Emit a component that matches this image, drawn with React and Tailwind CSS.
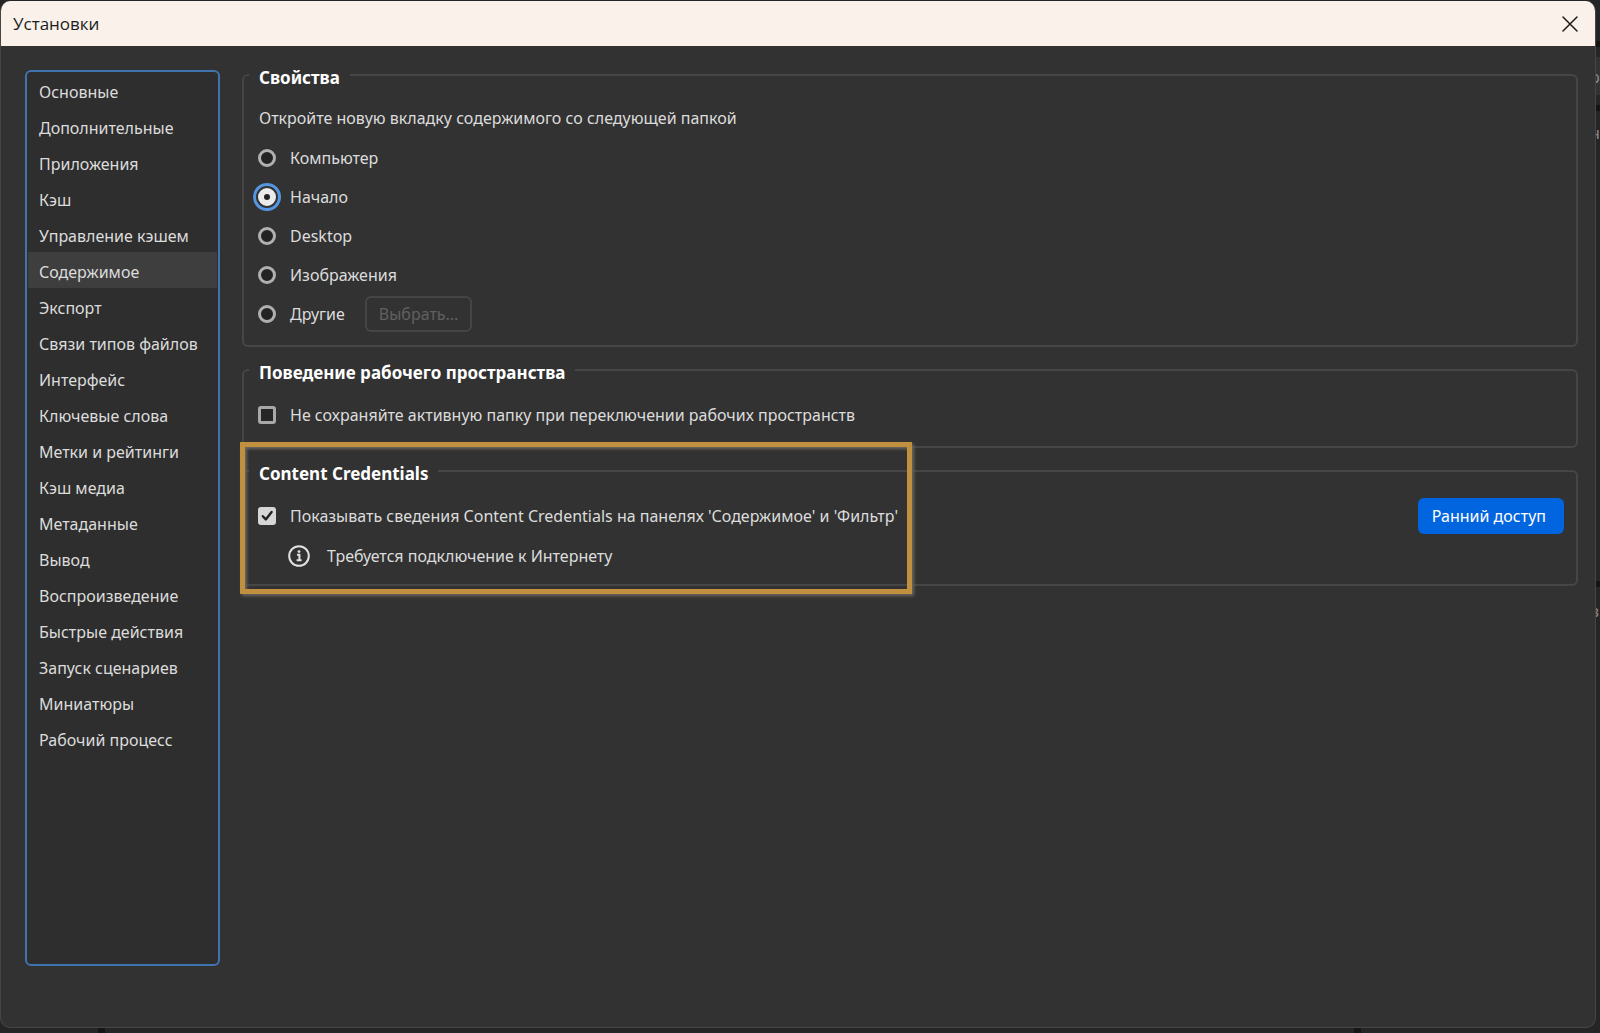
import React from "react";

const categories = [
  "Основные", "Дополнительные", "Приложения", "Кэш", "Управление кэшем", "Содержимое", "Экспорт",
  "Связи типов файлов", "Интерфейс", "Ключевые слова", "Метки и рейтинги", "Кэш медиа", "Метаданные",
  "Вывод", "Воспроизведение", "Быстрые действия", "Запуск сценариев", "Миниатюры", "Рабочий процесс",
];

const folders = ["Компьютер", "Начало", "Desktop", "Изображения", "Другие"];

function Group({ title, className, children }) {
  return (
    <fieldset className={"relative min-w-0 rounded-md border-2 border-[#464646] pl-[15px] pr-3 " + className}>
      <legend className="-ml-2.5 pl-2.5 pr-2.5 pt-1.5 text-[17px] leading-6 font-bold text-white">{title}</legend>
      {children}
    </fieldset>
  );
}

function Radio({ label, checked }) {
  return (
    <label className="flex items-center gap-3.5">
      <input
        type="radio"
        name="folder"
        defaultChecked={checked}
        className="-ml-px size-[18px] shrink-0 appearance-none rounded-full border-3 border-[#b0b0b0] bg-[#232323] checked:border-6 checked:border-[#ebebeb] checked:bg-[#222] checked:outline-3 checked:outline-offset-2 checked:outline-[#5596e3]"
      />
      {label}
    </label>
  );
}

function Check({ label, checked }) {
  return (
    <label className="flex items-center gap-3.5">
      <span className="relative -ml-px flex size-[18px] shrink-0">
        <input
          type="checkbox"
          defaultChecked={checked}
          className="peer size-[18px] appearance-none rounded-[3px] border-3 border-[#a8a8a8] bg-[#262626] checked:border-[#d6d6d6] checked:bg-[#d6d6d6]"
        />
        <svg viewBox="0 0 18 18" className="pointer-events-none absolute inset-0 hidden size-[18px] peer-checked:block" fill="none" stroke="#222" strokeWidth="2.4" strokeLinecap="round" strokeLinejoin="round">
          <path d="M4.8 9.2 7.8 12.4 13.6 5" />
        </svg>
      </span>
      {label}
    </label>
  );
}

export default function App() {
  return (
    <div className="flex min-h-screen bg-[#262526] pt-px font-['Noto_Sans',sans-serif] text-[16px] leading-6 text-[#dcdcdc]">
      <div className="flex min-w-0 grow flex-col">
        <div className="flex grow flex-col overflow-hidden rounded-[10px] border border-t-0 border-[#454545] bg-[#323232]">
          <header className="flex h-[45px] items-center justify-between bg-[#f9f1ea] pr-[15px] pl-3 text-[#1c1c1c]">
            <h1 className="font-['Open_Sans',sans-serif] text-[17px]">Установки</h1>
            <button type="button" aria-label="Закрыть" className="flex size-5 items-center justify-center">
              <svg viewBox="0 0 16 16" className="size-4" fill="none" stroke="#1c1c1c" strokeWidth="1.5" strokeLinecap="round">
                <path d="M1 1 15 15M15 1 1 15" />
              </svg>
            </button>
          </header>
          <div className="flex grow gap-[22px] pt-3.5 pr-[17px] pb-[61px] pl-6">
            <nav className="mt-2.5 w-[195px] shrink-0 rounded-md border-2 border-[#3f74ae] bg-[#2e2e2e] px-px">
              {categories.map((name) => (
                <button
                  key={name}
                  type="button"
                  aria-current={name === "Содержимое"}
                  className="flex h-9 w-full items-center pt-1 pl-[11px] whitespace-nowrap aria-[current=true]:bg-[#3e3e3e]"
                >
                  {name}
                </button>
              ))}
            </nav>
            <main className="min-w-0 grow">
              <Group title="Свойства" className="pb-3">
                <p className="mt-4">Откройте новую вкладку содержимого со следующей папкой</p>
                <div className="mt-2 flex flex-col">
                  {folders.map((name) => (
                    <div key={name} className="flex h-[39px] items-center gap-5">
                      <Radio label={name} checked={name === "Начало"} />
                      {name === "Другие" && (
                        <button type="button" disabled className="h-9 rounded-md border-2 border-[#454545] px-3 text-[#606060]">
                          Выбрать...
                        </button>
                      )}
                    </div>
                  ))}
                </div>
              </Group>
              <Group title="Поведение рабочего пространства" className="mt-2 pb-[19px]">
                <div className="mt-[18px]">
                  <Check label="Не сохраняйте активную папку при переключении рабочих пространств" />
                </div>
              </Group>
              <Group title="Content Credentials" className="mt-2 pb-4">
                <div className="mt-3 flex items-center justify-between">
                  <Check checked label="Показывать сведения Content Credentials на панелях 'Содержимое' и 'Фильтр'" />
                  <button type="button" className="h-9 rounded-md bg-[#0265e0] pr-[18px] pl-3.5 text-white">Ранний доступ</button>
                </div>
                <p className="mt-2.5 flex items-center gap-[17px] pl-[29px]">
                  <svg viewBox="0 0 22 22" className="size-[22px]" fill="none" stroke="#e2e2e2" strokeWidth="2">
                    <circle cx="11" cy="11" r="9.8" />
                    <path d="M9 9.8h2.4V15M8.6 15.2h5" />
                    <circle cx="11" cy="6.6" r="1.4" fill="#e2e2e2" stroke="none" />
                  </svg>
                  Требуется подключение к Интернету
                </p>
                <div className="pointer-events-none absolute -top-11 -bottom-2.5 -left-1 w-[672px] border-5 border-[#c0903f] shadow-[2px_2px_3px_#6b665f,inset_2px_2px_3px_#6b665f]" />
              </Group>
            </main>
          </div>
        </div>
        {/* dividers of the panels behind the dialog */}
        <div className="flex h-[5px] justify-between pr-[235px] pl-[98px]">
          <span className="w-[7px] bg-[#151515]" />
          <span className="w-[7px] bg-[#151515]" />
        </div>
      </div>
      {/* strip of the application window behind the dialog */}
      <div className="flex w-1 shrink-0 flex-col overflow-hidden text-[#8a8a8a]" aria-hidden="true">
        <span className="mt-10 h-1.5 shrink-0 bg-[#141414]" />
        <span className="mt-2.5 h-[38px] shrink-0 bg-[#333] pt-2">
          <span className="-ml-1.5">р</span>
        </span>
        <span className="mt-2.5 h-1.5 shrink-0 bg-[#141414]" />
        <span className="mt-2.5 -ml-1.5 shrink-0">н</span>
        <span className="mt-[436px] h-1.5 shrink-0 bg-[#141414]" />
        <span className="mt-3 -ml-1.5 shrink-0">в</span>
      </div>
    </div>
  );
}
